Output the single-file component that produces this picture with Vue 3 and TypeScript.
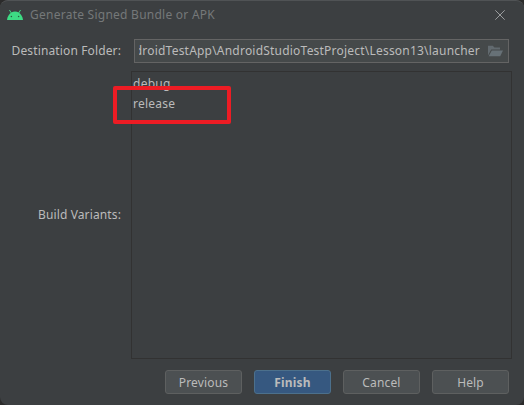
<script setup lang="ts">
import { ref } from 'vue'

const folder = ref('droidTestApp\\AndroidStudioTestProject\\Lesson13\\launcher')
const variants: string[] = ['debug', 'release']
const buttons: { label: string; primary?: boolean }[] = [
  { label: 'Previous' },
  { label: 'Finish', primary: true },
  { label: 'Cancel' },
  { label: 'Help' },
]
</script>

<template>
  <div class="backdrop">
    <main class="dialog">
      <header class="titlebar">
        <svg class="android" width="16" height="10" viewBox="0 0 16 10">
          <path d="M2.6 .3 4.3 3M13.4 .3 11.7 3" stroke="#3ddc84" stroke-width="1" stroke-linecap="round" />
          <path d="M0 10C.3 6.4 2.2 3.6 4.3 2.4 6.5 1.2 9.5 1.2 11.7 2.4 13.8 3.6 15.7 6.4 16 10Z" fill="#3ddc84" />
          <circle cx="4.4" cy="6.6" r=".75" fill="#285c40" />
          <circle cx="11.6" cy="6.6" r=".75" fill="#285c40" />
        </svg>
        <span class="title">Generate Signed Bundle or APK</span>
        <svg class="close" width="10" height="10" viewBox="0 0 10 10">
          <path d="M.3 .3 9.7 9.7M9.7 .3 .3 9.7" stroke="#9b9d9e" stroke-width="1" />
        </svg>
      </header>

      <section class="row folder-row">
        <label class="label">Destination Folder:</label>
        <div class="field">
          <div class="path"><span>{{ folder }}</span></div>
          <svg class="open" width="15" height="12" viewBox="0 0 15 12">
            <path d="M0 10.5V.7H4.8L6.4 2.5H12V4.6H3.2Z" fill="#626a6f" />
            <path d="M3.8 5.5H15L12.2 11.3H.7Z" fill="#677177" />
          </svg>
        </div>
      </section>

      <section class="row list-row">
        <label class="label">Build Variants:</label>
        <div class="list">
          <div v-for="v in variants" :key="v" class="item">{{ v }}</div>
          <div class="marker"></div>
        </div>
      </section>

      <footer class="actions">
        <button v-for="b in buttons" :key="b.label" :class="['btn', { primary: b.primary }]">{{ b.label }}</button>
      </footer>
    </main>
  </div>
</template>

<style>
body {
  overflow: hidden;
  background: #2b2b2b;
}
</style>

<style scoped>
* {
  box-sizing: border-box;
}
.backdrop {
  width: 524px;
  height: 405px;
  background: #2b2b2b;
}
.dialog {
  display: flex;
  flex-direction: column;
  width: 524px;
  height: 405px;
  border-top: 1px solid #505355;
  border-radius: 8px;
  background: #3c3f41;
  color: #bbbbbb;
  font: 12px/18px "Noto Sans", sans-serif;
  letter-spacing: 0.13px;
}
.titlebar {
  display: flex;
  align-items: center;
  height: 28px;
  padding: 0 19px 0 7px;
}
.android {
  margin-bottom: 1px;
}
.title {
  margin-left: 7px;
  color: #757879;
  letter-spacing: 0.25px;
}
.close {
  margin-left: auto;
  margin-bottom: 1px;
}
.row {
  display: flex;
}
.folder-row {
  height: 24px;
  margin-top: 10px;
}
.label {
  display: flex;
  align-items: center;
  justify-content: flex-end;
  width: 121px;
  white-space: nowrap;
}
.field {
  display: flex;
  align-items: center;
  width: 375px;
  height: 24px;
  margin-left: 13px;
  padding: 0 5px 0 4px;
  border: 1px solid #646464;
  background: #45494a;
}
.path {
  display: flex;
  justify-content: flex-end;
  width: 341px;
  overflow: hidden;
  white-space: nowrap;
  letter-spacing: 0.21px;
}
.open {
  margin-left: auto;
}
.list-row {
  height: 288px;
  margin-top: 8px;
}
.list {
  position: relative;
  width: 381px;
  margin-left: 10px;
  padding: 2px 1px;
  border: 1px solid #323232;
}
.item {
  height: 20px;
  line-height: 20px;
  letter-spacing: 0.25px;
}
.marker {
  position: absolute;
  left: -19px;
  top: 14px;
  width: 118px;
  height: 38px;
  border: 4px solid #ed1c24;
  border-radius: 2px;
}
.actions {
  display: flex;
  gap: 12px;
  margin: 11px 0 0 165px;
}
.btn {
  width: 77px;
  height: 24px;
  padding: 1px 0 0;
  border: 1px solid #5e6060;
  border-radius: 3px;
  background: #4c5052;
  color: #bbbbbb;
  font: inherit;
  letter-spacing: 0.15px;
}
.primary {
  border-color: #4c708c;
  background: #365880;
  font-weight: 700;
}
</style>
